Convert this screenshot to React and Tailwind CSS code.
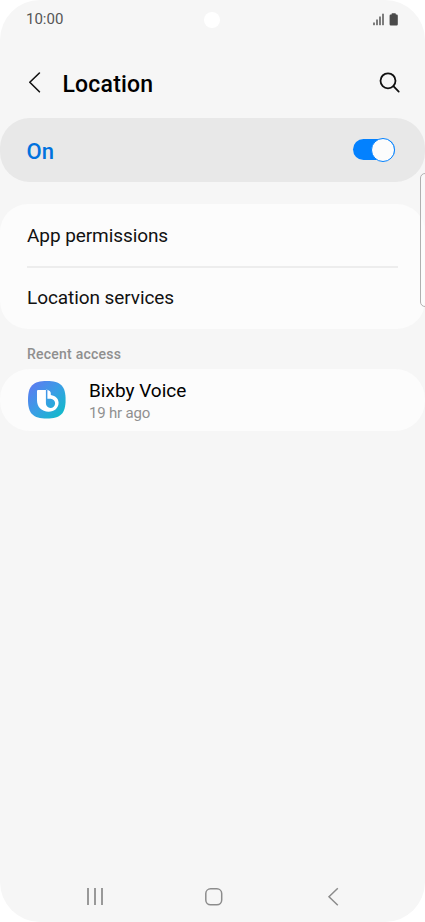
import React from 'react';

function StatusBar() {
    return (
        <div className="relative flex items-center justify-between h-[38px] pl-[26px] pr-[26px]">
            <span className="text-[15px] leading-[18px] text-[#555]">10:00</span>
            <div className="absolute left-[204px] top-[12px] w-4 h-4 rounded-full bg-white"></div>
            <svg className="w-[26px] h-[13px]" viewBox="0 0 26 13" fill="#4a4a4a">
                <rect x="0.3" y="9.5" width="1.4" height="2.7" />
                <rect x="3.3" y="6.5" width="1.4" height="5.7" />
                <rect x="6.3" y="3.5" width="1.4" height="8.7" />
                <rect x="9.3" y="0.7" width="1.4" height="11.5" />
                <path d="M19.2 0.2h3q.6 0 .6.6v.8h.9q1.1 0 1.1 1.1v8.6q0 1.2-1.2 1.2h-5.8q-1.2 0-1.2-1.2V2.7q0-1.1 1.1-1.1h.9V.8q0-.6.6-.6z" />
            </svg>
        </div>
    );
}

function Header() {
    return (
        <div className="flex items-center h-[80px] pt-[10px] pl-7 pr-[24px]">
            <svg className="w-[13px] h-[22px]" viewBox="0 0 13 22" fill="none" stroke="#111" strokeWidth="1.6" strokeLinecap="round" strokeLinejoin="round">
                <path d="M11.4 1L1.8 10.3L11.4 19.8" />
            </svg>
            <h1 className="ml-[21.5px] pt-[3px] flex-1 text-[23px] leading-7 font-medium tracking-[0.2px] text-black">Location</h1>
            <svg className="w-[22px] h-[22px]" viewBox="0 0 22 22" fill="none" stroke="#111" strokeWidth="1.8" strokeLinecap="round">
                <circle cx="9" cy="8.8" r="7.5" />
                <path d="M14.4 14.2L19.7 19.6" />
            </svg>
        </div>
    );
}

function Toggle() {
    return (
        <div className="flex items-center justify-end w-[42px] h-[21px] mb-px rounded-full bg-[#0381fe]">
            <div className="w-6 h-6 shrink-0 rounded-full border border-[#0381fe] bg-[#fcfcfc]"></div>
        </div>
    );
}

function BixbyIcon() {
    return (
        <svg className="w-[38px] h-[38px]" viewBox="0 0 38 38">
            <defs>
                <linearGradient id="bixby" x1="0" y1="0" x2="1" y2="1">
                    <stop offset="0.08" stopColor="#5b7cf0" />
                    <stop offset="0.5" stopColor="#399ee5" />
                    <stop offset="0.9" stopColor="#12b9ca" />
                </linearGradient>
            </defs>
            <path d="M18.8 0C32.6 0 37.6 5 37.6 18.8S32.6 37.6 18.8 37.6S0 32.6 0 18.8S5 0 18.8 0z" fill="url(#bixby)" />
            <path
                fillRule="evenodd"
                d="M10 9H19.5Q22.8 9.600 22.8 12.500V13.900C27.700 14.600 30.600 17.800 30.600 21.800C30.600 27 26.500 30.700 20.600 30.700C13.800 30.700 9 26 9 19.500V10Q9 9 10 9zM17.900 8.800V22.200A4.600 4.600 0 1 0 22.700 17.700H19.400V8.800z"
                fill="#fff"
            />
        </svg>
    );
}

function NavBar() {
    return (
        <div className="flex items-center h-[50px] pl-[87px]">
            <div className="flex gap-[5px] w-[17px]">
                <div className="w-[2px] h-[17px] mb-px shrink-0 bg-[#999]"></div>
                <div className="w-[2px] h-[17px] mb-px shrink-0 bg-[#999]"></div>
                <div className="w-[2px] h-[17px] mb-px shrink-0 bg-[#999]"></div>
            </div>
            <svg className="ml-[101px] w-[18px] h-[18px]" viewBox="0 0 18 18" fill="none" stroke="#8c8c8c" strokeWidth="1.5">
                <rect x="0.8" y="0.8" width="15.9" height="16" rx="4.8" />
            </svg>
            <svg className="ml-[104px] w-3 h-5" viewBox="0 0 12 20" fill="none" stroke="#8c8c8c" strokeWidth="1.5">
                <path d="M10.8 1.2L2 9.7L10.8 18.2" />
            </svg>
        </div>
    );
}

export default function App() {
    return (
        <div className="w-[425px] h-[922px] bg-white font-['Roboto',sans-serif]">
            <div className="relative flex flex-col h-full overflow-hidden rounded-[40px] bg-[#f6f6f6]">
                <StatusBar />
                <Header />

                <div className="flex items-center justify-between h-16 pl-[26.5px] pr-[30px] rounded-[30px] bg-[#e8e8e8]">
                    <span className="pt-[3px] text-[22px] leading-7 font-medium tracking-[0.2px] text-[#0072de]">On</span>
                    <Toggle />
                </div>

                <div className="mt-[22px] h-[125px] px-[27px] rounded-[28px] bg-[#fcfcfc] text-[19px] leading-6 tracking-[-0.08px] text-[#111]">
                    <div className="flex items-center h-[64px] pt-px border-b-2 border-[#ededed]">App permissions</div>
                    <div className="flex items-center h-[60px]">Location services</div>
                </div>

                <h2 className="mt-4 mb-[6px] pl-[27px] text-[14px] leading-[18px] font-medium tracking-[0.24px] text-[#8f8f8f]">Recent access</h2>

                <div className="flex items-center h-[62px] pl-[28px] rounded-[30px] bg-[#fcfcfc]">
                    <BixbyIcon />
                    <div className="ml-[23px] pt-[2px]">
                        <p className="text-[19px] leading-6 text-black">Bixby Voice</p>
                        <p className="text-[15px] leading-5 tracking-[-0.2px] text-[#909090]">19 hr ago</p>
                    </div>
                </div>

                <div className="flex-1"></div>
                <NavBar />

                {/* edge panel handle */}
                <div className="absolute right-[-5px] top-[173px] w-[10px] h-[134px] rounded-[5px] border-[1.5px] border-[#b0b0b0] bg-[#fcfcfc]/60"></div>
            </div>
        </div>
    );
}
